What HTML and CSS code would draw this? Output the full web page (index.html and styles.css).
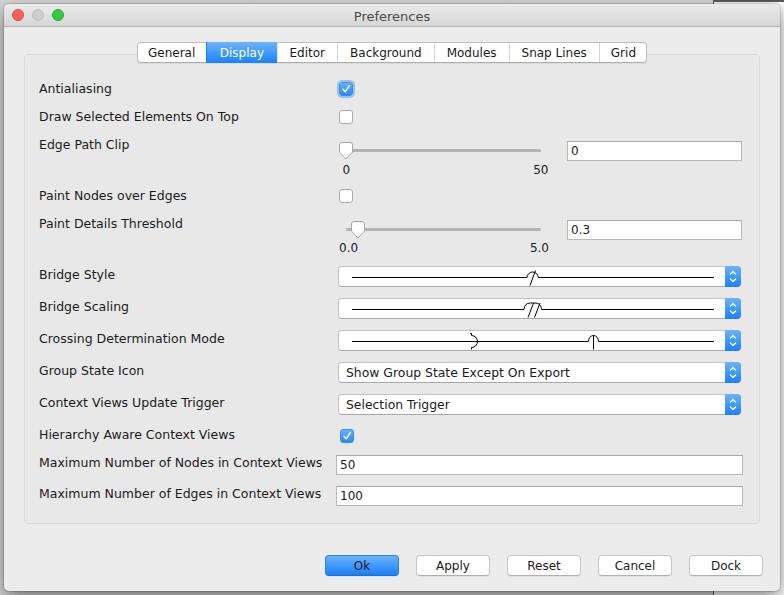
FILE: index.html
```html
<!DOCTYPE html>
<html>
<head>
<meta charset="utf-8">
<link rel="stylesheet" href="styles.css">
</head>
<body>
<div class="desktop">
  <div class="bgwin"></div>
  <div class="window">
    <div class="titlebar">
      <div class="lights">
        <span class="light red"></span>
        <span class="light grey"></span>
        <span class="light green"></span>
      </div>
      <div class="title">Preferences</div>
    </div>
    <div class="content">
      <div class="tabs">
        <span class="tab">General</span>
        <span class="tab active">Display</span>
        <span class="tab">Editor</span>
        <span class="tab">Background</span>
        <span class="tab">Modules</span>
        <span class="tab">Snap Lines</span>
        <span class="tab">Grid</span>
      </div>
      <div class="panel">
        <div class="row h28">
          <div class="label">Antialiasing</div>
          <div class="ctl"><span class="check on focus"><svg viewBox="0 0 14 14" width="14" height="14"><path d="M4 7.2 L6.2 9.8 L10.2 3.8" fill="none" stroke="#fff" stroke-width="1.5" stroke-linecap="round" stroke-linejoin="round"/></svg></span></div>
        </div>
        <div class="row h28">
          <div class="label">Draw Selected Elements On Top</div>
          <div class="ctl"><span class="check"></span></div>
        </div>
        <div class="row h51">
          <div class="label">Edge Path Clip</div>
          <div class="ctl sliderline">
            <div class="slider">
              <div class="track"></div>
              <div class="ticks t1"><span>0</span><span>50</span></div>
              <svg class="thumb" style="left:0px" viewBox="0 0 16 18" width="16" height="18"><path d="M1.5 3 Q1.5 0.5 4 0.5 H12 Q14.5 0.5 14.5 3 V10 L8 17 L1.5 10 Z" fill="#fff" stroke="#a6a6a6"/></svg>
            </div>
            <div class="field slim">0</div>
          </div>
        </div>
        <div class="row h28">
          <div class="label">Paint Nodes over Edges</div>
          <div class="ctl"><span class="check"></span></div>
        </div>
        <div class="row h51">
          <div class="label">Paint Details Threshold</div>
          <div class="ctl sliderline">
            <div class="slider">
              <div class="track"></div>
              <div class="ticks t2"><span>0.0</span><span>5.0</span></div>
              <svg class="thumb" style="left:11.7px" viewBox="0 0 16 18" width="16" height="18"><path d="M1.5 3 Q1.5 0.5 4 0.5 H12 Q14.5 0.5 14.5 3 V10 L8 17 L1.5 10 Z" fill="#fff" stroke="#a6a6a6"/></svg>
            </div>
            <div class="field slim">0.3</div>
          </div>
        </div>
        <div class="row h32">
          <div class="label">Bridge Style</div>
          <div class="ctl">
            <div class="combo">
              <div class="combo-val">
                <svg viewBox="0 0 386 19" width="386" height="19"><path d="M13 10.5 H188 A5.6 5.5 0 0 1 199.2 10.5 H375" fill="none" stroke="#000"/><path d="M191 18.5 L196.5 3.5" fill="none" stroke="#000"/></svg>
              </div>
              <div class="combo-btn"><svg viewBox="0 0 16 19" width="16" height="19"><path d="M5 7.5 L8 4.5 L11 7.5 M5 11.5 L8 14.5 L11 11.5" fill="none" stroke="#fff" stroke-width="1.3"/></svg></div>
            </div>
          </div>
        </div>
        <div class="row h32">
          <div class="label">Bridge Scaling</div>
          <div class="ctl">
            <div class="combo">
              <div class="combo-val">
                <svg viewBox="0 0 386 19" width="386" height="19"><path d="M13 10.5 H185 Q185.5 4 191.5 4 H196 Q202 4 202.5 10.5 H375" fill="none" stroke="#000"/><path d="M189 18.5 L194.5 4 M195.5 18.5 L201 4" fill="none" stroke="#000"/></svg>
              </div>
              <div class="combo-btn"><svg viewBox="0 0 16 19" width="16" height="19"><path d="M5 7.5 L8 4.5 L11 7.5 M5 11.5 L8 14.5 L11 11.5" fill="none" stroke="#fff" stroke-width="1.3"/></svg></div>
            </div>
          </div>
        </div>
        <div class="row h32">
          <div class="label">Crossing Determination Mode</div>
          <div class="ctl">
            <div class="combo">
              <div class="combo-val">
                <svg viewBox="0 0 386 19" width="386" height="19"><path d="M13 10.5 H249.5 A5 6 0 0 1 259.5 10.5 H375" fill="none" stroke="#000"/><path d="M254.5 4.5 V18.5" fill="none" stroke="#000"/><path d="M131 2.5 H132.5 V4.5 A6 6 0 0 1 132.5 16.5 V18.5" fill="none" stroke="#000"/></svg>
              </div>
              <div class="combo-btn"><svg viewBox="0 0 16 19" width="16" height="19"><path d="M5 7.5 L8 4.5 L11 7.5 M5 11.5 L8 14.5 L11 11.5" fill="none" stroke="#fff" stroke-width="1.3"/></svg></div>
            </div>
          </div>
        </div>
        <div class="row h32">
          <div class="label">Group State Icon</div>
          <div class="ctl">
            <div class="combo">
              <div class="combo-val text">Show Group State Except On Export</div>
              <div class="combo-btn"><svg viewBox="0 0 16 19" width="16" height="19"><path d="M5 7.5 L8 4.5 L11 7.5 M5 11.5 L8 14.5 L11 11.5" fill="none" stroke="#fff" stroke-width="1.3"/></svg></div>
            </div>
          </div>
        </div>
        <div class="row h32">
          <div class="label">Context Views Update Trigger</div>
          <div class="ctl">
            <div class="combo">
              <div class="combo-val text">Selection Trigger</div>
              <div class="combo-btn"><svg viewBox="0 0 16 19" width="16" height="19"><path d="M5 7.5 L8 4.5 L11 7.5 M5 11.5 L8 14.5 L11 11.5" fill="none" stroke="#fff" stroke-width="1.3"/></svg></div>
            </div>
          </div>
        </div>
        <div class="row h28">
          <div class="label">Hierarchy Aware Context Views</div>
          <div class="ctl"><span class="check on low"><svg viewBox="0 0 14 14" width="14" height="14"><path d="M4 7.2 L6.2 9.8 L10.2 3.8" fill="none" stroke="#fff" stroke-width="1.5" stroke-linecap="round" stroke-linejoin="round"/></svg></span></div>
        </div>
        <div class="row h31">
          <div class="label">Maximum Number of Nodes in Context Views</div>
          <div class="ctl"><div class="field wide">50</div></div>
        </div>
        <div class="row h31">
          <div class="label">Maximum Number of Edges in Context Views</div>
          <div class="ctl"><div class="field wide">100</div></div>
        </div>
      </div>
      <div class="buttons">
        <span class="btn default">Ok</span>
        <span class="btn">Apply</span>
        <span class="btn">Reset</span>
        <span class="btn">Cancel</span>
        <span class="btn">Dock</span>
      </div>
    </div>
  </div>
</div>
</body>
</html>
```
FILE: styles.css
```css
* { box-sizing: border-box; }
html, body {
  margin: 0;
  padding: 0;
  width: 784px;
  height: 595px;
  overflow: hidden;
}
body {
  background: #d8d8d8;
  font-family: "DejaVu Sans", "Liberation Sans", sans-serif;
  font-size: 12px;
  color: #1b1b1b;
}
.desktop {
  position: relative;
  width: 784px;
  height: 595px;
  overflow: hidden;
}
.bgwin {
  position: absolute;
  left: 713px;
  top: 0;
  width: 71px;
  height: 595px;
  background: #fff;
  border-left: 1px solid #5a5a5a;
  border-top: 2px solid #5a5a5a;
}
.window {
  position: absolute;
  left: 4px;
  top: 4px;
  width: 776px;
  height: 587px;
  background: #ececec;
  border-radius: 5px;
  box-shadow: 0 0 0 1px rgba(0,0,0,0.12), 0 6px 18px rgba(0,0,0,0.5);
  display: flex;
  flex-direction: column;
  overflow: hidden;
}
.titlebar {
  height: 23px;
  flex: none;
  position: relative;
  background: linear-gradient(#ebebeb, #d6d6d6);
  border-bottom: 1px solid #b3b3b3;
  display: flex;
  align-items: center;
  justify-content: center;
}
.lights {
  position: absolute;
  left: 8px;
  top: 5px;
  display: flex;
  gap: 8px;
}
.light {
  width: 12px;
  height: 12px;
  border-radius: 50%;
  display: block;
}
.light.red { background: #fc605b; border: 1px solid #de4b45; }
.light.grey { background: #cfcfcf; border: 1px solid #bdbdbd; }
.light.green { background: #34c84a; border: 1px solid #26a936; }
.title {
  font-size: 13px;
  color: #4a4a4a;
  padding-top: 2px;
}
.content {
  flex: 1;
  display: flex;
  flex-direction: column;
  padding-top: 15px;
}
.tabs {
  position: relative;
  z-index: 1;
  align-self: center;
  display: flex;
  height: 21px;
  margin-bottom: -9px;
  background: #fff;
  border: 1px solid #bdbdbd;
  border-bottom-color: #adadad;
  border-radius: 4px;
  box-shadow: 0 1px 1px rgba(0,0,0,0.06);
}
.tab {
  display: flex;
  align-items: center;
  padding: 0 12px;
  height: 19px;
  border-left: 1px solid #d6d6d6;
  color: #1b1b1b;
}
.tab:first-child { border-left: none; border-radius: 3px 0 0 3px; padding-left: 10px; padding-right: 11px; }
.tab:last-child { border-radius: 0 3px 3px 0; padding-left: 11px; padding-right: 10px; }
.tab.active {
  background: linear-gradient(#6db3fb, #1a82fb);
  color: #fff;
  border-left-color: #1a82fb;
  margin-top: -1px;
  height: 21px;
  padding: 0 12.5px;
}
.tab.active + .tab { border-left-color: #e4e4e4; }
.panel {
  margin: 0 20px;
  height: 470px;
  flex: none;
  background: #e8e8e8;
  border: 1px solid #d9d9d9;
  border-radius: 4px;
  padding: 25px 16px 0 14px;
}
.row {
  display: grid;
  grid-template-columns: 297px 1fr;
  align-items: start;
}
.h28 { height: 28px; }
.h31 { height: 31px; }
.h32 { height: 32px; }
.h51 { height: 51px; }
.label {
  font-size: 12.5px;
  line-height: 16px;
  margin-top: 1px;
  white-space: nowrap;
}
.ctl { display: flex; }
.check {
  display: block;
  width: 14px;
  height: 14px;
  margin: 2px 0 0 3px;
  background: #fff;
  border: 1px solid #ababab;
  border-radius: 3px;
}
.check svg { display: block; margin: -1px; }
.check.on {
  background: linear-gradient(#69b0fb, #2d89f5);
  border-color: #3d8de6;
}
.check.focus { box-shadow: 0 0 0 2px rgba(95,160,240,0.55); }
.check.low { margin-top: 3px; margin-left: 4px; }
.sliderline { align-items: flex-start; }
.slider {
  position: relative;
  width: 229px;
  height: 38px;
  margin: 6px 0 0 2px;
  flex: none;
}
.track {
  margin: 7px 0 0 8px;
  width: 195px;
  height: 3px;
  border-radius: 2px;
  background: #b4b4b4;
}
.ticks {
  display: flex;
  justify-content: space-between;
  line-height: 14px;
  margin-top: 11px;
}
.ticks.t1 { margin-left: 4.5px; width: 206px; }
.ticks.t2 { margin-left: 1px; width: 210px; margin-top: 10px; }
.thumb {
  position: absolute;
  top: 0;
  display: block;
}
.field {
  height: 20px;
  background: #fff;
  border: 1px solid #b9b9b9;
  border-top-color: #a9a9a9;
  padding-left: 3px;
  line-height: 18px;
}
.field.slim {
  flex: 1;
  margin: 5px 1px 0 0;
}
.field.wide {
  flex: 1;
  margin-top: 1px;
}
.combo {
  flex: 1;
  margin: 0 2px;
  height: 21px;
  display: flex;
  background: #fff;
  border: 1px solid #c2c2c2;
  border-bottom-color: #a8a8a8;
  border-radius: 4px;
}
.combo-val {
  flex: 1;
  display: flex;
  align-items: center;
}
.combo-val svg { display: block; }
.combo-val.text { padding-left: 7px; font-size: 12.4px; }
.combo-btn {
  width: 16px;
  flex: none;
  margin: -1px -1px -1px 0;
  background: linear-gradient(#6cb2fb, #1a80fa);
  border-radius: 0 4px 4px 0;
  display: flex;
  align-items: center;
  justify-content: center;
}
.combo-btn svg { display: block; }
.buttons {
  display: flex;
  justify-content: flex-end;
  gap: 17px;
  margin-top: 31px;
  padding-right: 17px;
}
.btn {
  width: 74px;
  height: 21px;
  display: flex;
  align-items: center;
  justify-content: center;
  background: #fff;
  border: 1px solid #c6c6c6;
  border-bottom-color: #b0b0b0;
  border-radius: 4px;
  box-shadow: 0 1px 1px rgba(0,0,0,0.05);
}
.btn.default {
  background: linear-gradient(#6bb1fb, #1b7ffa);
  border-color: #2b84ef;
  border-bottom-color: #1a6fd9;
}
```
